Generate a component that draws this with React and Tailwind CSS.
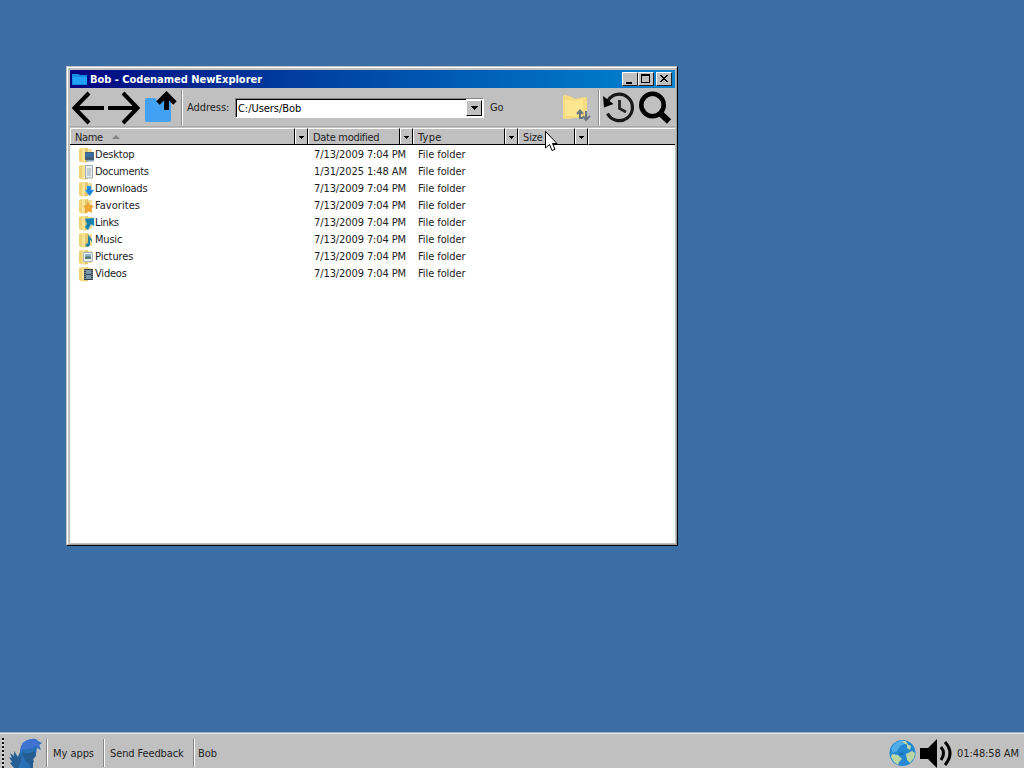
import React from "react";

const FOLDERS = [
  ["Desktop", "7/13/2009 7:04 PM", "tracking-[-0.2px]"],
  ["Documents", "1/31/2025 1:48 AM", "tracking-[-0.32px]"],
  ["Downloads", "7/13/2009 7:04 PM", "tracking-[-0.22px]"],
  ["Favorites", "7/13/2009 7:04 PM", "tracking-[0.05px]"],
  ["Links", "7/13/2009 7:04 PM", "tracking-[-0.35px]"],
  ["Music", "7/13/2009 7:04 PM", "tracking-[-0.2px]"],
  ["Pictures", "7/13/2009 7:04 PM", "tracking-[-0.1px]"],
  ["Videos", "7/13/2009 7:04 PM", "tracking-[-0.2px]"],
];

function FolderIcon({ name }) {
  return (
    <svg width="16" height="16" viewBox="0 0 16 16" className="shrink-0">
      <path d="M0 2L3 1H8V15L3 15.500L0 14Z" fill="#efd373" />
      <path d="M3 1H8V14L3 15Z" fill="#f7e398" />
      <path d="M6 2L9 1V15L6 15.5Z" fill="#e5c86c" />
      <path d="M9 2H13V14H9Z" fill="#f4df94" />
      {name === "Desktop" && (
        <g><path d="M6 5H15V13H6Z" fill="#3f5f7c" /><path d="M7 6H14V10H7Z" fill="#386f9c" /><path d="M7 13H15V14.5H7Z" fill="#8aa5b5" /></g>
      )}
      {name === "Documents" && (
        <g><path d="M6.500 1.500H13.500V14H6.500Z" fill="#e9edf0" stroke="#9da9b0" /><path d="M8 5H12M8 7H12M8 9H12M8 11H12" stroke="#9cabb6" /></g>
      )}
      {name === "Downloads" && <path d="M8 5H12V9H15L10.500 15L6 9H8Z" fill="#2183e0" stroke="#6bbbf3" strokeWidth=".5" />}
      {name === "Favorites" && <path d="M9 4L10.500 7.500L14.500 8L12 10.500L12.500 14.500L9 12.500L6 14.500L6.500 10.500L5 8L8 7.500Z" fill="#f4a832" stroke="#d98b22" strokeWidth=".5" />}
      {name === "Links" && <path d="M6 4L15 3V11L12 9L9 15L6 12L8 9Z" fill="#197fad" stroke="#3babcc" strokeWidth=".5" />}
      {name === "Music" && <path d="M9 2C9.500 5 14.500 6 12.500 11C12.500 8 11 8 11 8V13C10 16 5 15 7 12L9 11Z" fill="#247fa5" />}
      {name === "Pictures" && (
        <g><path d="M4.500 3.500H13.500V12.500H4.500Z" fill="#e8f0f2" stroke="#a9b5b9" /><path d="M6 5H12V10H6Z" fill="#8cb4ca" /><path d="M6 8L9 7L12 8V10H6Z" fill="#547a78" /></g>
      )}
      {name === "Videos" && (
        <g><path d="M5 3H14V14H5Z" fill="#36434e" /><path d="M7 4H12V8H7ZM7 9H12V13H7Z" fill="#7799b0" /><path d="M6 4V14M13 4V14" stroke="#b1bcc1" strokeDasharray="1 1" /></g>
      )}
    </svg>
  );
}

function Caret() {
  return (
    <svg width="7" height="4" viewBox="0 0 7 4" shapeRendering="crispEdges">
      <path d="M0 0H7V1H6V2H5V3H4V4H3V3H2V2H1V1H0Z" fill="#000" />
    </svg>
  );
}

function SmallCaret() {
  return (
    <svg width="5" height="3" viewBox="0 0 5 3" shapeRendering="crispEdges">
      <path d="M0 0H5V1H4V2H3V3H2V2H1V1H0Z" fill="#000" />
    </svg>
  );
}

function Column({ label, width, sorted, text }) {
  return (
    <div className={`flex h-[17px] border-b border-black ${width}`}>
      <div className="flex min-w-0 flex-1 items-center border-t border-l border-r border-t-white border-l-white border-r-black pl-1">
        <span className={`pt-px leading-[15px] whitespace-nowrap text-[#222] ${text}`}>{label}</span>
        {sorted && (
          <svg width="8" height="4" viewBox="0 0 8 4" className="ml-[9px]"><path d="M0 4L4 0L8 4Z" fill="#858585" /></svg>
        )}
      </div>
      <div className="flex w-[13px] items-center justify-center border-t border-l border-r border-t-white border-l-white border-r-black pt-px">
        <SmallCaret />
      </div>
    </div>
  );
}

function CaptionButton({ children }) {
  return (
    <div className="h-[14px] w-4 border border-t-white border-r-[#222] border-b-[#222] border-l-white bg-[#c0c0c0]">
      <svg width="14" height="12" viewBox="0 0 14 12" shapeRendering="crispEdges">{children}</svg>
    </div>
  );
}

function ToolSeparator() {
  return <div className="h-[35px] w-0.5 shrink-0 border-l border-r border-l-[#8d8d8d] border-r-white" />;
}

function Toolbar() {
  return (
    <div className="flex h-[38px] items-center">
      <svg width="110" height="38" viewBox="0 0 110 38" className="shrink-0">
        <g fill="none" stroke="#000" strokeWidth="4">
          <path d="M34 20H5M19 5L4.500 20L19 35" />
          <path d="M38 20H67M53 5L67.500 20L53 35" />
        </g>
        <path d="M75 12Q75 10 77 10H85L88 13H101V32Q101 34 99 34H77Q75 34 75 32Z" fill="#42a1f3" />
        <path d="M96.500 22V8M88 15L96.500 6.500L105 15" fill="none" stroke="#000" strokeWidth="4.800" />
      </svg>
      <div className="ml-px"><ToolSeparator /></div>
      <span className="ml-1 w-12 pt-0.5 whitespace-nowrap text-[#222] tracking-[-0.05px]">Address:</span>
      <div className="mt-0.5 flex h-5 w-[249px] border border-[#858585] border-r-white border-b-white bg-white">
        <div className="flex flex-1 items-center border-t border-l border-black pl-px">
          <span className="leading-4 tracking-[-0.05px]">C:/Users/Bob</span>
        </div>
        <div className="my-px mr-px flex w-4 items-center justify-center border border-t-white border-r-black border-b-black border-l-white bg-[#c0c0c0]">
          <Caret />
        </div>
      </div>
      <span className="ml-1.5 w-[70px] pt-0.5 text-[#222] tracking-[-0.2px]">Go</span>
      <svg width="32" height="32" viewBox="0 0 32 32" className="shrink-0">
        <path d="M3 6Q3 4 5 4L12 6L14 8L25 6Q27 6 27 8V26L5 28Q3 28 3 26Z" fill="#f5dc80" />
        <path d="M5 9L15 10L23 8V25H5Z" fill="#ffe995" opacity=".7" />
        <g fill="none" stroke="#687681" strokeWidth="2"><path d="M20 20V27H23M17 23L20 19.500L23 23" /><path d="M26 20V28M23 25L26 29L30 25" /></g>
      </svg>
      <div className="ml-auto"><ToolSeparator /></div>
      <svg width="75" height="38" viewBox="0 0 75 38" className="shrink-0">
        <path d="M8 12.500A13.200 13.200 0 1 1 7.500 25.500" fill="none" stroke="#181818" strokeWidth="3.200" />
        <path d="M3 8L4 19.500L13.500 16Z" fill="#000" />
        <path d="M19.500 12V20.500L26 24" fill="none" stroke="#222" strokeWidth="2.800" />
        <circle cx="52.500" cy="17" r="11.200" fill="none" stroke="#000" strokeWidth="4.600" />
        <path d="M60 25L69 33.500" stroke="#000" strokeWidth="6" />
      </svg>
    </div>
  );
}

function Explorer() {
  return (
    <section className="absolute top-[66px] left-[66px] flex h-[480px] w-[612px] flex-col border-t border-r border-b border-l border-t-[#c0c0c0] border-r-black border-b-black border-l-[#c0c0c0] bg-[#c0c0c0]">
      <div className="flex flex-1 flex-col border border-t-white border-r-[#a0a0a0] border-b-[#a0a0a0] border-l-white p-0.5 pr-px pb-px">
        <header className="flex h-[18px] items-center bg-linear-to-r from-[#000080] to-[#1084d0] pr-[3px] pl-0.5">
          <svg width="16" height="16" viewBox="0 0 16 16"><path d="M0 3H6L8 4H15V14H0Z" fill="#138be0" /><path d="M1 6H15V13H1Z" fill="#21a0f8" /></svg>
          <h1 className="ml-0.5 pt-0.5 text-[11px] leading-4 font-bold tracking-[-0.02px] whitespace-nowrap text-white">Bob - Codenamed NewExplorer</h1>
          <div className="ml-auto flex">
            <CaptionButton><path d="M3 9H9V11H3Z" /></CaptionButton>
            <CaptionButton><path d="M2 1H11V10H2ZM3 3V9H10V3Z" fillRule="evenodd" /></CaptionButton>
            <div className="ml-0.5"><CaptionButton><path d="M3 2H5V3H6V4H8V3H9V2H11V3H10V4H9V5H8V6H9V7H10V8H11V9H9V8H8V7H6V8H5V9H3V8H4V7H5V6H6V5H5V4H4V3H3Z" /></CaptionButton></div>
          </div>
        </header>
        <Toolbar />
        <div className="h-0.5 border-t border-[#a9a9a9]" />
        <div className="flex">
          <Column label="Name" width="w-[238px]" sorted text="tracking-[-0.4px]" />
          <Column label="Date modified" width="w-[105px]" text="tracking-[-0.3px]" />
          <Column label="Type" width="w-[105px]" text="tracking-[0.25px]" />
          <Column label="Size" width="w-[70px]" text="tracking-[-0.15px]" />
          <div className="flex-1 border-t border-b border-l border-t-white border-b-black border-l-white" />
        </div>
        <main className="flex-1 bg-white pt-px">
          {FOLDERS.map(([name, date, tracking]) => (
            <div key={name} className="flex h-[17px] items-center whitespace-nowrap text-[#222]">
              <div className="flex w-[244px] items-center pl-[9px]"><FolderIcon name={name} /><span className={`leading-4 ${tracking}`}>{name}</span></div>
              <span className="w-[104px] leading-4 tracking-[-0.1px]">{date}</span>
              <span className="leading-4 tracking-[-0.08px]">File folder</span>
            </div>
          ))}
        </main>
      </div>
    </section>
  );
}

function TaskButton({ children, width }) {
  return <div className={`flex h-7 items-center border-l border-l-[#858585] ${width}`}><div className="flex h-7 items-center border-l border-white pt-0.5 pl-[5px] whitespace-nowrap">{children}</div></div>;
}

function Taskbar() {
  return (
    <footer className="flex h-9 items-center border-t border-[#9fb0bf] bg-[#c0c0c0] text-[#222]">
      <div className="flex h-[35px] flex-1 items-center border-t border-[#e8e8e8] pt-1">
        <div className="ml-0.5 h-[31px] w-0.5 bg-[repeating-linear-gradient(to_bottom,#111_0px,#111_2px,#ddd_2px,#ddd_4px)]" />
        <svg width="42" height="30" viewBox="0 0 42 30" className="shrink-0">
          <path d="M16 14L14 19L10 13L10 18L6 15L8 20L5 19L8 24L6 25L10 30H29V24L22 18Z" fill="#245e93" />
          <path d="M16 13Q17 5 24 2Q32 -1 34 3L38 5L35 7L37 12L33 10L32 16L29 21L25 20L26 30H14Q17 26 17 20Z" fill="#2871b9" />
          <path d="M16 13Q17 2 27 1Q35 0 36 10L32 8Q26 12 20 11Z" fill="#3f73d2" />
          <path d="M18 14Q23 17 31 13L32 18L29 21L30 24L26 27Q20 23 18 14Z" fill="#235d91" />
        </svg>
        <TaskButton width="w-[57px]"><span className="tracking-[-0.05px]">My apps</span></TaskButton>
        <TaskButton width="w-[90px]"><span className="tracking-[-0.12px]">Send Feedback</span></TaskButton>
        <TaskButton width="w-10"><span className="-ml-0.5">Bob</span></TaskButton>
        <div className="ml-auto flex items-center pr-[5px]">
          <svg width="28" height="28" viewBox="0 0 28 28">
            <circle cx="14.500" cy="14" r="13" fill="#2488d3" />
            <path d="M3 10L7 4L14 1L18 4L12 7L9 12L5 14Z" fill="#51aee8" />
            <path d="M14 2L18 2L20 6L17 5ZM19 5L23 7L22 11L19 9ZM4 15L10 16L14 20L11 23L10 26L6 23L3 18ZM18 15L24 12L27 14L26 19L22 24L19 21Z" fill="#bbd6a3" />
            <path d="M11 13L16 14L15 17L11 16Z" fill="#1874bd" />
          </svg>
          <svg width="36" height="31" viewBox="0 0 36 31" className="ml-1">
            <path d="M0 10H8L17 1V30L8 21H0Z" fill="#000" />
            <path d="M21 9Q26 15 21 22M25 4Q35 15 25 27" fill="none" stroke="#000" strokeWidth="3" />
          </svg>
          <span className="ml-px pt-0.5 tracking-[-0.08px] whitespace-nowrap">01:48:58 AM</span>
        </div>
      </div>
    </footer>
  );
}

export default function App() {
  return (
    <div className="relative flex h-[768px] w-[1024px] flex-col justify-end overflow-hidden bg-[#3a6ea5] font-['DejaVu_Sans_Condensed','DejaVu_Sans',sans-serif] text-[11px] leading-4 [font-stretch:condensed]">
      <Explorer />
      <Taskbar />
      <svg width="13" height="21" viewBox="0 0 13 21" className="absolute top-[131px] left-[545px]">
        <path d="M.5 .5V17L4.500 13.500L7 19.500L10 18.200L7.500 12.500H12Z" fill="#fff" stroke="#000" />
      </svg>
    </div>
  );
}
